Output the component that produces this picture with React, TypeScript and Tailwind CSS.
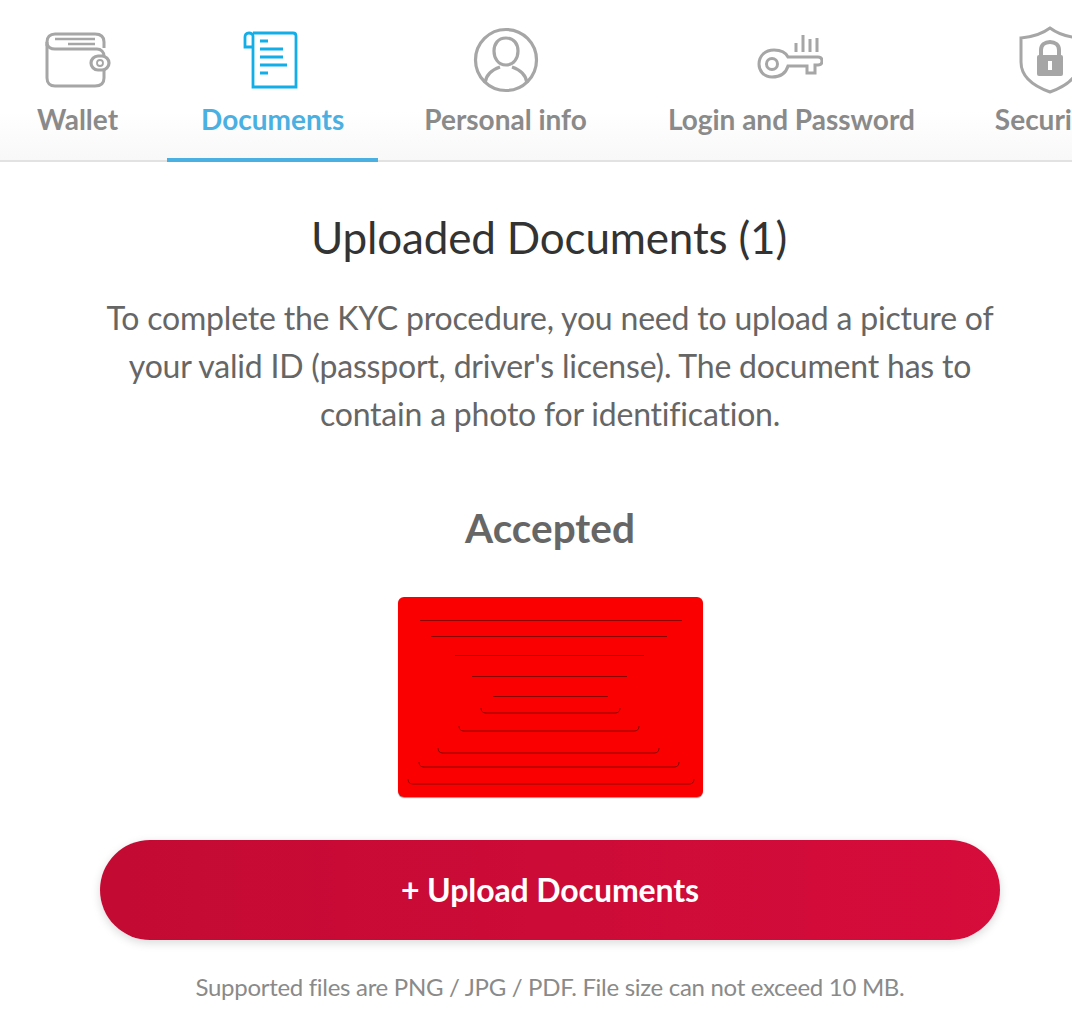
import type { ReactNode } from "react";

function WalletIcon() {
  return (
    <svg width="66" height="56" viewBox="0 0 66 56" fill="none" stroke="#a6a6a6" strokeWidth="3">
      <path d="M2 14V10C2 5 5 2 10 2H50C56 2 59 5 59 10V16" />
      <path d="M2 10V46C2 51 5 54 10 54H50C56 54 59 51 59 46V38" />
      <path d="M2 12C3 15 6 17 10 17H52C56 17 59 20 59 24" />
      <path d="M10 7H50M23 12H50" strokeWidth="2.4" />
      <rect x="46" y="24" width="18" height="14" rx="7" fill="#fff" strokeWidth="3.2" />
      <circle cx="55" cy="31" r="3" strokeWidth="1.8" />
    </svg>
  );
}

function DocumentIcon() {
  return (
    <svg width="56" height="58" viewBox="0 0 56 58" fill="none" stroke="#12aee8" strokeWidth="2.8" className="mr-[4px]">
      <path d="M10 2H50C52 2 53 3 53 5V56H10V5C10 3 8 2 6 2C3 2 2 4 2 6V16H10" />
      <path d="M17 10H25M17 18H40M17 26H40M17 34H44M17 42H25" strokeWidth="3" />
    </svg>
  );
}

function PersonIcon() {
  return (
    <svg width="66" height="66" viewBox="0 0 66 66" fill="none" stroke="#a6a6a6" strokeWidth="3.2">
      <circle cx="33" cy="33" r="30.5" />
      <path d="M33 11C25 11 21 17 21 24C21 31 25 38 33 38C41 38 45 31 45 24C45 17 41 11 33 11Z" />
      <path d="M12 56C13 48 18 43 27 40M54 56C53 48 48 43 39 40" />
    </svg>
  );
}

function KeyIcon() {
  return (
    <svg width="66" height="46" viewBox="0 0 66 46" fill="none" stroke="#a6a6a6" strokeWidth="3" className="mr-[3px] mb-[9px]">
      <path d="M39 19V10M46 19V2M53 19V6M60 19V5" />
      <path d="M17 17C24 17 29 20 31 24H61C64 24 65 26 65 28C65 31 63 32 61 32H58V40H50V33H31C29 40 24 44 15 44C6 44 2 37 2 31C2 23 8 17 17 17Z" />
      <circle cx="15" cy="31" r="5.5" />
    </svg>
  );
}

function ShieldIcon() {
  return (
    <svg width="62" height="68" viewBox="0 0 62 68" fill="none" stroke="#a6a6a6" strokeWidth="3" className="ml-[8px]">
      <path d="M31 2C39 8 48 11 60 12V36C60 50 48 60 31 66C14 60 2 50 2 36V12C14 11 23 8 31 2Z" />
      <path d="M22 31V24C22 19 26 16 31 16C36 16 40 19 40 24V31" strokeWidth="4" />
      <rect x="18" y="29" width="26" height="21" rx="2" fill="#a6a6a6" stroke="none" />
      <rect x="29" y="35" width="4" height="9" fill="#fff" stroke="none" />
    </svg>
  );
}

function Tab({ icon, label, active }: { icon: ReactNode; label: string; active?: boolean }) {
  return (
    <div
      className={
        "flex h-[162px] shrink-0 flex-col items-center px-[34px] pt-[25px] " +
        (active ? "border-b-[4px] border-[#4ab0e2]" : "")
      }
    >
      <div className="flex h-[70px] items-center">{icon}</div>
      <span
        className={
          "mt-[8px] whitespace-nowrap text-[28px] font-bold leading-[32px] " +
          (active ? "text-[#4ab0e2]" : "text-[#8a8a8a]")
        }
      >
        {label}
      </span>
    </div>
  );
}

// the red picture in the reference, lines only
function AcceptedDoc() {
  const top = [
    [30.5, 30, 292],
    [46.5, 41, 277],
    [65.5, 65, 254],
    [86.5, 82, 237],
    [106.5, 103, 218],
  ];
  const bottom = [
    [123, 91, 230],
    [141, 69, 249],
    [163, 48, 269],
    [177, 29, 289],
    [194, 18, 304],
  ];
  return (
    <svg width="305" height="200" viewBox="8 7 305 200" className="block">
      {top.map(([y, a, b]) => (
        <path key={y} d={`M${a} ${y}H${b}`} stroke="#8a0000" strokeWidth="1" />
      ))}
      {bottom.map(([y, a, b]) => (
        <path
          key={y}
          d={`M${a} ${y - 5}Q${a} ${y} ${a + 5} ${y}H${b - 5}Q${b} ${y} ${b} ${y - 5}`}
          stroke="#8a0000"
          strokeWidth="1"
          fill="none"
        />
      ))}
    </svg>
  );
}

export default function App() {
  return (
    <div className="h-[1030px] w-[1072px] overflow-hidden bg-white font-['Lato',sans-serif]">
      <nav className="flex h-[162px] border-b-2 border-[#e2e2e2] bg-gradient-to-b from-white from-70% to-[#f8f8f8] pl-[3px]">
        <Tab icon={<WalletIcon />} label="Wallet" />
        <div className="ml-[15px]">
          <Tab icon={<DocumentIcon />} label="Documents" active />
        </div>
        <div className="ml-[12px]">
          <Tab icon={<PersonIcon />} label="Personal info" />
        </div>
        <div className="ml-[13px]">
          <Tab icon={<KeyIcon />} label="Login and Password" />
        </div>
        <div className="ml-[12px]">
          <Tab icon={<ShieldIcon />} label="Security" />
        </div>
      </nav>

      <main className="ml-[100px] flex w-[900px] flex-col items-center">
        <h1 className="mt-[49px] pr-[2px] text-[44px] leading-[52px] tracking-[-0.17px] text-[#333]">
          Uploaded Documents (1)
        </h1>
        <p className="mt-[31px] text-center text-[32px] leading-[48px] tracking-[-0.2px] text-[#666]">
          To complete the KYC procedure, you need to upload a picture of your valid ID (passport, driver's
          license). The document has to contain a photo for identification.
        </p>
        <h2 className="mt-[66px] text-[40.5px] font-bold leading-[48px] text-[#666]">Accepted</h2>
        <div className="mt-[45px] h-[200px] w-[305px] overflow-hidden rounded-[6px] bg-[#fa0000] shadow-[0_1px_1px_#999]">
          <AcceptedDoc />
        </div>
        <button className="mt-[43px] h-[100px] w-full rounded-[50px] bg-gradient-to-r from-[#c30a33] to-[#d60c3b] text-[32px] font-bold tracking-[-0.1px] text-white shadow-[0_3px_10px_rgba(0,0,0,0.15)]">
          + Upload Documents
        </button>
        <p className="mt-[31px] text-[24px] leading-[32px] tracking-[-0.3px] text-[#8a8a8a]">
          Supported files are PNG / JPG / PDF. File size can not exceed 10 MB.
        </p>
      </main>
    </div>
  );
}
